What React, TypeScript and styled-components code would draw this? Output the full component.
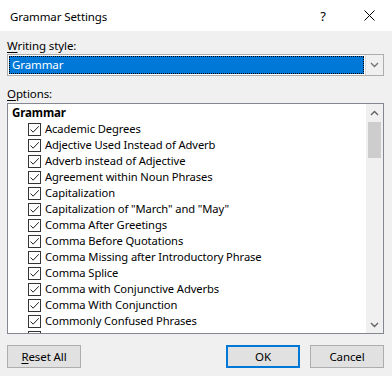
import React from "react";
import styled, { createGlobalStyle } from "styled-components";

const Global = createGlobalStyle`
  html, body { margin: 0; padding: 0; background: #f0f0f0; }
  body { font-family: "Noto Sans", "Segoe UI", sans-serif; font-size: 11px; color: #000; letter-spacing: -0.1px; }
  * { box-sizing: border-box; }
`;

const Dialog = styled.div`
  width: 392px;
  height: 376px;
  display: flex;
  flex-direction: column;
  background: #f0f0f0;
  overflow: hidden;
`;

const TitleBar = styled.div`
  height: 31px;
  background: #fff;
  display: flex;
  align-items: center;
  padding-left: 10px;
`;

const Title = styled.div`
  flex: 1;
  font-size: 11.5px;
  padding-top: 1px;
`;

const TitleBtn = styled.div`
  width: 46px;
  height: 31px;
  display: flex;
  align-items: center;
  justify-content: center;
  font-size: 13px;
`;

const Body = styled.div`
  flex: 1;
  display: flex;
  flex-direction: column;
  padding: 0 8px 0 7px;
`;

const Label = styled.div<{ $top: number }>`
  margin-top: ${(p) => p.$top}px;
  height: 15px;
  line-height: 15px;
  font-size: 11.5px;
  u { text-decoration: underline; text-underline-offset: 2px; }
`;

const Select = styled.div`
  margin-top: 1px;
  height: 22px;
  border: 1px solid #adadad;
  background: #fff;
  display: flex;
  padding: 1px;
`;

const SelectValue = styled.div`
  flex: 1;
  background: #0078d7;
  color: #fff;
  border: 1px dotted #000;
  line-height: 16px;
  padding-left: 2px;
  font-size: 11.5px;
`;

const SelectArrow = styled.div`
  width: 18px;
  margin: -1px -1px -1px 1px;
  background: #f0f0f0;
  border-left: 1px solid #d9d9d9;
  display: flex;
  align-items: center;
  justify-content: center;
`;

const ListBox = styled.div`
  margin-top: 2px;
  height: 231px;
  border: 1px solid #828790;
  background: #fff;
  display: flex;
`;

const ListContent = styled.div`
  flex: 1;
  overflow: hidden;
  padding-top: 1px;
`;

const GroupHeader = styled.div`
  height: 16px;
  line-height: 16px;
  padding-left: 4px;
  font-weight: 700;
  font-size: 11.5px;
`;

const Row = styled.div`
  height: 16px;
  display: flex;
  align-items: center;
  padding-left: 20px;
  gap: 4px;
  white-space: nowrap;
`;

const Box = styled.div`
  width: 13px;
  height: 13px;
  border: 1px solid #333;
  background: #fff;
  display: flex;
  align-items: center;
  justify-content: center;
  flex: none;
`;

const RowText = styled.span`
  font-size: 11.2px;
  line-height: 16px;
`;

const ScrollBar = styled.div`
  width: 17px;
  background: #f0f0f0;
  display: flex;
  flex-direction: column;
  align-items: center;
`;

const ScrollArrow = styled.div`
  height: 17px;
  width: 17px;
  display: flex;
  align-items: center;
  justify-content: center;
`;

const Thumb = styled.div`
  margin-top: 1px;
  width: 13px;
  height: 36px;
  background: #cdcdcd;
`;

const Spacer = styled.div`
  flex: 1;
`;

const ButtonRow = styled.div`
  margin-top: 11px;
  display: flex;
  gap: 10px;
`;

const Button = styled.div<{ $primary?: boolean }>`
  width: 74px;
  height: 23px;
  background: #e1e1e1;
  border: ${(p) => (p.$primary ? "2px solid #0078d7" : "1px solid #adadad")};
  display: flex;
  align-items: center;
  justify-content: center;
  font-size: 11.5px;
  u { text-decoration: underline; text-underline-offset: 2px; }
`;

const Check = () => (
  <svg width="11" height="11" viewBox="0 0 11 11">
    <path d="M1.5 5.5 L4.2 8.2 L9.8 2.2" fill="none" stroke="#222" strokeWidth="1" />
  </svg>
);

const Chevron = ({ up, color = "#606060" }: { up?: boolean; color?: string }) => (
  <svg width="9" height="6" viewBox="0 0 9 6">
    <path
      d={up ? "M1 5 L4.5 1.5 L8 5" : "M1 1 L4.5 4.5 L8 1"}
      fill="none"
      stroke={color}
      strokeWidth="1.3"
    />
  </svg>
);

const items = [
  "Academic Degrees",
  "Adjective Used Instead of Adverb",
  "Adverb instead of Adjective",
  "Agreement within Noun Phrases",
  "Capitalization",
  'Capitalization of "March" and "May"',
  "Comma After Greetings",
  "Comma Before Quotations",
  "Comma Missing after Introductory Phrase",
  "Comma Splice",
  "Comma with Conjunctive Adverbs",
  "Comma With Conjunction",
  "Commonly Confused Phrases",
];

export default function App() {
  return (
    <>
      <Global />
      <Dialog>
        <TitleBar>
          <Title>Grammar Settings</Title>
          <TitleBtn>?</TitleBtn>
          <TitleBtn>
            <svg width="11" height="11" viewBox="0 0 11 11">
              <path d="M0.5 0.5 L10.5 10.5 M10.5 0.5 L0.5 10.5" stroke="#000" strokeWidth="1" />
            </svg>
          </TitleBtn>
        </TitleBar>
        <Body>
          <Label $top={7}>
            <u>W</u>riting style:
          </Label>
          <Select>
            <SelectValue>Grammar</SelectValue>
            <SelectArrow>
              <Chevron color="#707070" />
            </SelectArrow>
          </Select>
          <Label $top={10}>
            <u>O</u>ptions:
          </Label>
          <ListBox>
            <ListContent>
              <GroupHeader>Grammar</GroupHeader>
              {items.map((t) => (
                <Row key={t}>
                  <Box>
                    <Check />
                  </Box>
                  <RowText>{t}</RowText>
                </Row>
              ))}
              <Row>
                <Box>
                  <Check />
                </Box>
              </Row>
            </ListContent>
            <ScrollBar>
              <ScrollArrow>
                <Chevron up />
              </ScrollArrow>
              <Thumb />
              <Spacer />
              <ScrollArrow>
                <Chevron />
              </ScrollArrow>
            </ScrollBar>
          </ListBox>
          <ButtonRow>
            <Button>
              <u>R</u>eset All
            </Button>
            <Spacer />
            <Button $primary>OK</Button>
            <Button>Cancel</Button>
          </ButtonRow>
        </Body>
      </Dialog>
    </>
  );
}
